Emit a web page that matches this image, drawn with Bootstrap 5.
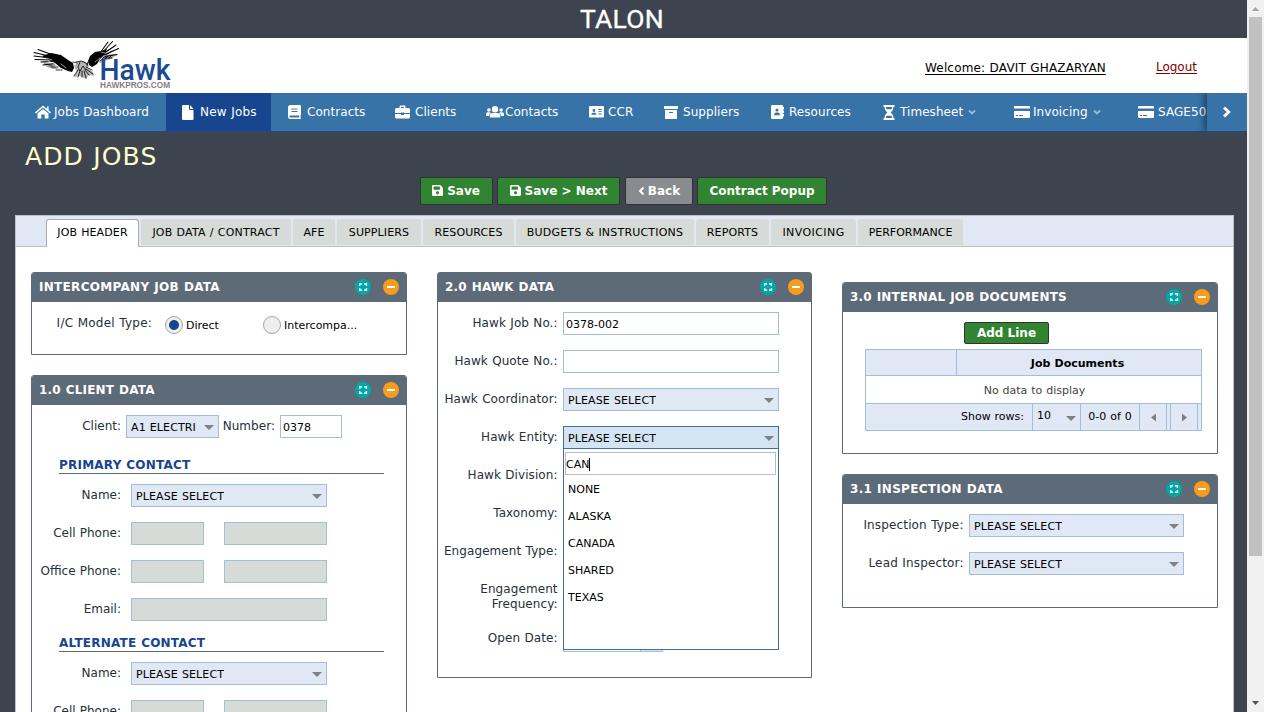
<!DOCTYPE html>
<html lang="en">
<head>
<meta charset="utf-8">
<meta name="viewport" content="width=device-width, initial-scale=1">
<title>Talon - Add Jobs</title>
<link href="https://cdn.jsdelivr.net/npm/bootstrap@5.3.0/dist/css/bootstrap.min.css" rel="stylesheet">
<style>
body{font-family:"DejaVu Sans",Verdana,sans-serif;font-size:12px;line-height:15px;color:#000;background:#3e444f;height:712px;overflow:hidden;word-spacing:.034em}
.page{width:1247px;height:712px;overflow:hidden}
.brandbar{height:38px;font:400 26.5px/38px Roboto,sans-serif;color:#fff;padding-right:3px;letter-spacing:.3px;-webkit-text-stroke:.3px #fff}
.userbar{height:55px;padding:0 50px 0 33px}
.userbar a{line-height:16px;text-underline-offset:2px}
.welcome{color:#000;margin:4px 50px 0 0;letter-spacing:.16px}
.logout{color:#800000;margin-top:2px}
.mainnav{height:39px;background:#3873a8;border-bottom:1px solid #1c4a8a;padding-left:19px;color:#fff;position:relative;letter-spacing:.06px}
.mainnav .nav-link{width:var(--w);padding:0 0 0 16px;color:#fff;line-height:38px;height:38px;white-space:nowrap}
.mainnav .nav-link.active{background:#17468f;height:38px;letter-spacing:.2px}
.mainnav .ic{width:var(--i);flex:none;display:flex;align-items:center}
.mainnav .caret{margin-left:5px;opacity:.5}
.i1{--w:147px;--i:19px}.i2{--w:106px;--i:18px}.i3{--w:107px;--i:19px}.i4{--w:91px;--i:20px}
.i5{--w:103px;--i:19px}.i6{--w:75px;--i:19px}.i7{--w:107px;--i:19px}.i8{--w:112px;--i:18px}
.i9{--w:131px;--i:17px}.i10{--w:124px;--i:19px}.i11{--w:100px;--i:20px}
.mainnav .i2.active{width:105px;margin-right:1px}
.scroller{position:absolute;right:0;top:0;width:40px;height:38px;background:#3873a8;box-shadow:0 0 8px 2px rgba(0,0,0,.5);clip-path:inset(0 0 0 -12px)}
.title{font-size:25px;line-height:30px;color:#ffc;padding:10px 0 0 25px;height:45px;letter-spacing:1.100px}
.toolbar{height:38px;padding-left:420px}
.tbtn{height:28px;border:1px solid #333;border-radius:2px;background:#318431;color:#fff;font-weight:700;font-size:12px;line-height:24px;padding:0;white-space:nowrap}
.tbtn.gray{background:#888b90}
.b1{width:73px}.b2{width:123px;margin-left:4px}.b3{width:68px;margin-left:5px}.b4{width:130px;margin-left:4px}
.tbtn svg{margin:0 4px -1px 0}
.b1 svg{margin-left:-1px}
.b3 svg{margin-right:3px}
.panel{width:1219px;height:520px;margin-left:15px;border:1px solid #bfc1c6;background:#fff}
.tabstrip{height:31px;background:#e0e7f5;border-bottom:1px solid #bfc1c6;padding:3px 0 0 30px;gap:2px;flex-wrap:nowrap;font-size:11px}
.tabstrip .nav-link{height:26px;width:var(--w);padding:0;text-align:center;line-height:27px;color:#000;background:#d6dbd7;border:0;border-radius:3px 3px 0 0;white-space:nowrap;letter-spacing:.12px}
.tabstrip .nav-link.active{height:28px;line-height:25px;background:#fff;border:1px solid #a9abb0;border-bottom:0;color:#000}
.t1{--w:93px}.t2{--w:150px}.t3{--w:42px}.t4{--w:84px}.t5{--w:91px}.t6{--w:178px}.t7{--w:73px}.t8{--w:85px}.t9{--w:105px}
.tabstrip .t2,.tabstrip .t6{letter-spacing:.2px}.tabstrip .t8{letter-spacing:.42px}.tabstrip .t9{letter-spacing:0}
.cols{padding:25px 15px 0;gap:30px}
.cols>div{width:376px;flex:none}
.cols>.mid{width:375px}
.cols>.right{padding-top:10px}
.box{border:1px solid #5d6a77;border-radius:3px 3px 0 0;margin-bottom:20px;background:#fff;overflow:hidden}
.box.over{overflow:visible}
.boxhead{height:29px;background:#5d6a77;color:#fff;font-weight:700;padding:0 7px 1px 7px;letter-spacing:.2px}
.boxhead span{line-height:28px}
.boxhead svg{margin-top:-1px}
.wide{letter-spacing:.3px}
.h83{height:83px}.h400{height:400px}.h406{height:406px}.h172{height:172px}.h134{height:134px}
.boxbody{padding-top:10px}
.frow{height:23px;margin-bottom:15px}
.frow label{width:var(--lw);text-align:right;line-height:22px;color:#26303a;white-space:nowrap;flex:none;letter-spacing:.08px;padding-right:.400px}
.client{--lw:89px}.hawk{--lw:120px}.insp{--lw:121px}
.client .frow label{letter-spacing:0;padding-right:0}
.insp .frow label{letter-spacing:.15px}
.fld{height:23px;border:1px solid #a3bfd5;background:#fff;font-size:11px;line-height:23px;padding-left:2px;white-space:nowrap;flex:none}
.fld.sel{background:#e0e7f5;padding:2px 4px 0 4px;display:flex;align-items:center;justify-content:space-between}
.fld.sel span{overflow:hidden;letter-spacing:.12px;line-height:20px}
.fld.off{background:#d6dbd7}
.fld.open{background:#d4e4f3;border-color:#3c7099}
.tri{width:0;height:0;border:5px solid transparent;border-top-color:#808080;border-bottom:0}
.w216{width:216px}.w215{width:215px}.w196{width:196px}.w93{width:93px}.w62{width:62px}.w73{width:73px}.w103{width:103px}.w100{width:100px}
.sect{width:325px;height:16px;margin:0 0 10px 27px;border-bottom:1px solid #5d6a77;color:#17468f;font-weight:700;line-height:14px;letter-spacing:.22px}
.radio{width:18px;height:18px;border:1px solid #a5a5a5;border-radius:50%;background:#eee}
.radio.on{background:radial-gradient(circle,#17468f 4.5px,#eee 5.4px)}
.drop{position:absolute;left:0;top:22px;width:216px;height:202px;border:1px solid #3c7099;background:#fff;z-index:5;font-size:11px;padding:3px 2px 0 1px}
.drop .query{height:23px;border:1px solid #bdbdbd;line-height:23px;padding-left:0;margin-bottom:1px}
.cursor{display:inline-block;width:1px;height:13px;background:#000;vertical-align:-3px}
.drop .opt{height:27px;line-height:28px;padding-left:3px}
.grid{width:337px;height:82px;margin:5px 0 0 22px;border:1px solid #a3bfd5;font-size:11px}
.grid .bl{border-left:1px solid #a3bfd5}
.ghead{height:26px;background:#e0e7f5;border-bottom:1px solid #a3bfd5;line-height:27px;font-weight:700}
.ghead .flex-fill{padding-right:3px}
.gempty{height:28px;border-bottom:1px solid #a3bfd5;line-height:29px;color:#444;padding-left:2px}
.gpager{height:26px;background:#e0e7f5;line-height:25px}
.addline{width:85px;height:22px;line-height:19px;margin-left:121px}
.sbar{width:17px;height:712px;background:#f1f1f1}
.thumb{width:13px;height:539px;background:#c1c1c1}
.ms-5p{margin-left:5px}.ms-10p{margin-left:10px}.ms-20p{margin-left:20px}
.mb-20{margin-bottom:20px}
.client.frow label.iclabel{width:120.500px;letter-spacing:.23px;text-align:right}
.rg1{margin-left:12.500px;height:25px;width:98px}.rg2{height:25px}
.rt{font-size:11px;margin-left:3px;line-height:27px;height:25px}
.client .frow label.numlabel{width:56px;margin-left:0;letter-spacing:.04px}
.tall{height:36px}.hawk .tall label{line-height:15px;padding-top:4px}
.hawk .last label{line-height:19px}
.datebtn{width:22px;background:#e0e7f5;border-left:1px solid #a3bfd5}
.gc1{width:90px}
.p1{width:166px;padding-right:8px}.p2{width:48px;padding:0 4px 0 4px}.p3{width:59px}.p4{width:27px}.p5{width:4px}
.p2 span{line-height:23px;align-self:flex-start}
.p2 .tri{margin-top:2px}
</style>
</head>
<body class="d-flex">
<svg width="0" height="0" class="position-absolute">
<symbol id="max" viewBox="0 0 16 16"><circle cx="8" cy="8" r="8" fill="#00a9a8"/><path d="M4.700 6.900V4.700h2.400M9 4.700h2.400v2.200M11.400 9.100v2.200H9M7.100 11.300H4.700V9.100" fill="none" stroke="#fff" stroke-width="1.400"/></symbol>
<symbol id="min" viewBox="0 0 16 16"><circle cx="8" cy="8" r="8" fill="#f89c1c"/><path d="M4 7h8v2H4z" fill="#fff"/></symbol>
<symbol id="save" viewBox="0 32 448 448"><path fill="#fff" d="M433.941 129.941l-83.882-83.882A48 48 0 0 0 316.118 32H48C21.490 32 0 53.490 0 80v352c0 26.510 21.490 48 48 48h352c26.510 0 48-21.490 48-48V163.882a48 48 0 0 0-14.059-33.941zM224 416c-35.346 0-64-28.654-64-64s28.654-64 64-64 64 28.654 64 64-28.654 64-64 64zm96-304.520V212c0 6.627-5.373 12-12 12H76c-6.627 0-12-5.373-12-12V108c0-6.627 5.373-12 12-12h228.520c3.183 0 6.235 1.264 8.485 3.515l3.480 3.480A11.996 11.996 0 0 1 320 111.480z"/></symbol>
<symbol id="card2" viewBox="0 0 16 14"><path fill="#fff" fill-rule="evenodd" d="M1 1h14q1 0 1 1v1.500H0V2q0-1 1-1zM0 6h16v6q0 1-1 1H1q-1 0-1-1zM2 10v1h2v-1zM5 10v1h4v-1z"/></symbol>
<symbol id="down" viewBox="0 0 8 6"><path d="M1 1.500l3 3 3-3" fill="none" stroke="#fff" stroke-width="1.900"/></symbol>
</svg>
<div class="page">
  <header>
    <div class="brandbar text-center">TALON</div>
    <div class="userbar bg-white d-flex align-items-center">
      <svg width="140" height="55" viewBox="33 38 140 55" class="me-auto">
        <g fill="#000" stroke="#000" stroke-linecap="round" stroke-linejoin="round">
          <path stroke="none" fill="#aaa" d="M42 61l8 3 9 5-6 0-6-2zM103 56l8-2 6 1-7 4-7 3-4 1z"/>
          <path stroke="none" d="M42 56l9-3 10 2 7 5 5 3 1 5-2 4-4-1-7-3-6-5-6-3z"/>
          <path stroke="none" d="M88 61l2-5 5-4 6-1 6-2-2 5-5 5-3 5-5 3-3-2z"/>
          <path fill="none" stroke-width="1.100" d="M53 55l-15-5.500M51 56.500l-17-4M50 58l-16-2M50 60l-15-.500M52 61.500l-11 .500M54 63.500l-11 1.500M100 53l8-11M102 53l10.500-11.500M103 54l13-9M104 55l14.500-6.500M105 56.500l12-2M104 58l8 0"/>
          <path stroke="none" fill="#b5b5b5" d="M74 66l4-4 6-1 4 3 0 4 5 4 1 4-5-1-3 4-6-3-6 1 3-5z"/>
          <path fill="none" stroke-width=".8" d="M76 62l5-1 5 2 2 3M80 62l-2 5 2 4 3-5 3 4M78 70l-4 6M80 71l-2 6M82 71l0 6M84 71l2 7M85 70l4 5M86 69l7 5M86 67l6 3M73 62l4 1M88 62l-1 3M49 65l6 0M51 67l7 0M56 70l6 0M106 55l6-4M100 61l4-4M104 60l4-4M109 58l3-3"/>
          <path fill="none" stroke="#fff" stroke-width=".6" d="M46 58l6 2M48 61l7 3M95 62l5-4M101 52l4 1M61 64l5 4"/>
        </g>
        <text x="99.500" y="80" textLength="71" lengthAdjust="spacingAndGlyphs" font-family="Roboto" font-weight="500" font-size="29" fill="#1d4a95">Hawk</text>
        <text x="100" y="88" textLength="70" lengthAdjust="spacingAndGlyphs" font-family="Liberation Sans" font-weight="700" font-size="8.500" fill="#858080">HAWKPROS.COM</text>
      </svg>
      <a href="#" class="welcome">Welcome: DAVIT GHAZARYAN</a>
      <a href="#" class="logout">Logout</a>
    </div>
    <nav class="mainnav nav flex-nowrap overflow-hidden">
      <a class="nav-link d-flex i1" href="#"><span class="ic"><svg width="16" height="14" viewBox="0 0 16 14"><path fill="#fff" d="M8 4l5.500 4.500V13q0 .500-.500.500H9.700V9.500H6.300v4H3q-.500 0-.500-.500V8.500z"/><path d="M.5 8L8 1.500 15.500 8M12.800 1.500v4" fill="none" stroke="#fff" stroke-width="1.600"/></svg></span>Jobs Dashboard</a>
      <a class="nav-link d-flex active i2" href="#"><span class="ic"><svg width="12" height="15" viewBox="0 0 12 15"><path fill="#fff" d="M1 0h6v4q0 1 1 1h3.500v9q0 1-1 1H1q-1 0-1-1V1q0-1 1-1zM8 0l3.500 4H8z"/></svg></span>New Jobs</a>
      <a class="nav-link d-flex i3" href="#"><span class="ic"><svg width="13" height="14" viewBox="0 0 13 14"><path fill="#fff" fill-rule="evenodd" d="M2.500 0H12q1 0 1 1v8.500q0 .500-.500 1v2q.500 0 .500.700t-.700.800H2.500Q0 14 0 11.500v-9Q0 0 2.500 0zM3.500 3.500v1h6v-1zM3.500 6v1h6V6zM2.500 10.500q-1 0-1 1t1 1h8.700v-2z"/></svg></span>Contracts</a>
      <a class="nav-link d-flex i4" href="#"><span class="ic"><svg width="15" height="14" viewBox="0 0 15 14"><path fill="#fff" fill-rule="evenodd" d="M4.500 3V1.500Q4.500.500 5.500.500h4q1 0 1 1V3h3Q15 3 15 4.500V8H9V7.500H6V8H0V4.500Q0 3 1.500 3zM6 2v1h3V2zM0 9h6v1h3V9h6v3q0 1.500-1.500 1.500h-12Q0 13.500 0 12z"/></svg></span>Clients</a>
      <a class="nav-link d-flex i5" href="#"><span class="ic"><svg width="18" height="12" viewBox="0 0 18 12"><g fill="#fff"><circle cx="9" cy="3.200" r="3.200"/><circle cx="2.900" cy="4" r="1.800"/><circle cx="15.100" cy="4" r="1.800"/><path d="M3.800 11.500V10q0-3 3-3h4.400q3 0 3 3v1.500zM0 9.500V8q0-1.800 1.800-1.800h2L4.800 7Q3.200 8 3 10H0zM18 9.500V8q0-1.800-1.800-1.800h-2l-1 .8q1.600 1 1.800 3h3z"/></g></svg></span>Contacts</a>
      <a class="nav-link d-flex i6" href="#"><span class="ic"><svg width="15" height="12" viewBox="0 0 15 12"><path fill="#fff" fill-rule="evenodd" d="M1 0h13q1 0 1 1v9.500q0 1-1 1H1q-1 0-1-1V1q0-1 1-1zM3.500 4.500A1.400 1.400 0 1 0 6.300 4.500 1.400 1.400 0 1 0 3.500 4.500zM2.300 8.800h5.200Q7.300 6.700 5.900 6.700h-2Q2.500 6.700 2.300 8.800zM9.300 3v.900h3.500V3zM9.300 5.200v.9h3.500v-.9zM9.300 7.500v.9h3.500v-.9z"/></svg></span>CCR</a>
      <a class="nav-link d-flex i7" href="#"><span class="ic"><svg width="14" height="13" viewBox="0 0 14 13"><path fill="#fff" fill-rule="evenodd" d="M0 0h14v3H0zM1 4h12v8.500q0 .500-.500.500h-11q-.500 0-.500-.500zM5 6v1h4V6z"/></svg></span>Suppliers</a>
      <a class="nav-link d-flex i8" href="#"><span class="ic"><svg width="13" height="14" viewBox="0 0 13 14"><path fill="#fff" fill-rule="evenodd" d="M1.200 0h9.600Q12 0 12 1.200V2h1v2.500h-1v1h1V8h-1v1h1v2.500h-1v1.300q0 1.200-1.200 1.200H1.200Q0 14 0 12.800V1.200Q0 0 1.200 0zM4.400 5A1.600 1.600 0 1 0 7.600 5 1.600 1.600 0 1 0 4.400 5zM3 10.200h6q-.100-2.700-1.900-2.700H4.900Q3.100 7.500 3 10.200z"/></svg></span>Resources</a>
      <a class="nav-link d-flex i9" href="#"><span class="ic"><svg width="12" height="15" viewBox="0 0 12 15"><path fill="#fff" fill-rule="evenodd" d="M.5 0h11v2h-1q0 3.500-2.800 5.500Q10.500 9.500 10.500 13h1v2H.5v-2h1q0-3.500 2.800-5.500Q1.500 5.500 1.500 2h-1zM3 2q0 1.200.500 2.200h5Q9 3.200 9 2zM3.500 10.800Q3 11.800 3 13h6q0-1.200-.5-2.200z"/></svg></span>Timesheet<svg class="caret align-self-center" width="8" height="6"><use href="#down"/></svg></a>
      <a class="nav-link d-flex i10" href="#"><span class="ic"><svg width="16" height="14"><use href="#card2"/></svg></span>Invoicing<svg class="caret align-self-center" width="8" height="6"><use href="#down"/></svg></a>
      <a class="nav-link d-flex i11" href="#"><span class="ic"><svg width="16" height="14"><use href="#card2"/></svg></span>SAGE50</a>
      <div class="scroller d-flex align-items-center justify-content-center"><svg width="10" height="12" viewBox="0 0 10 12"><path d="M2 1.500L6.800 6 2 10.500" fill="none" stroke="#fff" stroke-width="2.800"/></svg></div>
    </nav>
  </header>
  <h1 class="title m-0 fw-normal">ADD JOBS</h1>
  <div class="toolbar d-flex">
    <button class="tbtn b1"><svg width="11" height="11" class="align-baseline"><use href="#save"/></svg>Save</button>
    <button class="tbtn b2"><svg width="11" height="11" class="align-baseline"><use href="#save"/></svg>Save &gt; Next</button>
    <button class="tbtn gray b3"><svg width="7" height="10" viewBox="0 0 7 10" class="align-baseline"><path d="M5.500 1.500L2 5l3.500 3.500" fill="none" stroke="#fff" stroke-width="2"/></svg>Back</button>
    <button class="tbtn b4">Contract Popup</button>
  </div>
  <main class="panel">
    <nav class="tabstrip nav">
      <a class="nav-link active t1" href="#">JOB HEADER</a><a class="nav-link t2" href="#">JOB DATA / CONTRACT</a><a class="nav-link t3" href="#">AFE</a><a class="nav-link t4" href="#">SUPPLIERS</a><a class="nav-link t5" href="#">RESOURCES</a><a class="nav-link t6" href="#">BUDGETS &amp; INSTRUCTIONS</a><a class="nav-link t7" href="#">REPORTS</a><a class="nav-link t8" href="#">INVOICING</a><a class="nav-link t9" href="#">PERFORMANCE</a>
    </nav>
    <div class="cols d-flex align-items-start">
      <div>
        <section class="box h83">
          <div class="boxhead d-flex align-items-center"><span class="me-auto wide">INTERCOMPANY JOB DATA</span><svg width="16" height="16" class="me-2"><use href="#max"/></svg><svg width="16" height="16" class="ms-1"><use href="#min"/></svg></div>
          <div class="boxbody">
            <div class="frow client d-flex"><label class="iclabel">I/C Model Type:</label>
              <div class="d-flex align-items-center rg1"><i class="radio on"></i><span class="rt">Direct</span></div>
              <div class="d-flex align-items-center rg2"><i class="radio"></i><span class="rt">Intercompa...</span></div>
            </div>
          </div>
        </section>
        <section class="box h400">
          <div class="boxhead d-flex align-items-center"><span class="me-auto">1.0 CLIENT DATA</span><svg width="16" height="16" class="me-2"><use href="#max"/></svg><svg width="16" height="16" class="ms-1"><use href="#min"/></svg></div>
          <div class="boxbody client">
            <div class="frow d-flex mb-20"><label>Client:</label><div class="fld sel w93 ms-5p"><span>A1 ELECTRI</span><i class="tri"></i></div><label class="numlabel">Number:</label><div class="fld w62 ms-5p">0378</div></div>
            <div class="sect">PRIMARY CONTACT</div>
            <div class="frow d-flex"><label>Name:</label><div class="fld sel w196 ms-10p"><span>PLEASE SELECT</span><i class="tri"></i></div></div>
            <div class="frow d-flex"><label>Cell Phone:</label><div class="fld off w73 ms-10p"></div><div class="fld off w103 ms-20p"></div></div>
            <div class="frow d-flex"><label>Office Phone:</label><div class="fld off w73 ms-10p"></div><div class="fld off w103 ms-20p"></div></div>
            <div class="frow d-flex"><label>Email:</label><div class="fld off w196 ms-10p"></div></div>
            <div class="sect">ALTERNATE CONTACT</div>
            <div class="frow d-flex"><label>Name:</label><div class="fld sel w196 ms-10p"><span>PLEASE SELECT</span><i class="tri"></i></div></div>
            <div class="frow d-flex"><label>Cell Phone:</label><div class="fld off w73 ms-10p"></div><div class="fld off w103 ms-20p"></div></div>
          </div>
        </section>
      </div>
      <div class="mid">
        <section class="box over h406">
          <div class="boxhead d-flex align-items-center"><span class="me-auto">2.0 HAWK DATA</span><svg width="16" height="16" class="me-2"><use href="#max"/></svg><svg width="16" height="16" class="ms-1"><use href="#min"/></svg></div>
          <div class="boxbody hawk">
            <div class="frow d-flex"><label>Hawk Job No.:</label><div class="fld w216 ms-5p">0378-002</div></div>
            <div class="frow d-flex"><label>Hawk Quote No.:</label><div class="fld w216 ms-5p"></div></div>
            <div class="frow d-flex"><label>Hawk Coordinator:</label><div class="fld sel w216 ms-5p"><span>PLEASE SELECT</span><i class="tri"></i></div></div>
            <div class="frow d-flex"><label>Hawk Entity:</label>
              <div class="position-relative ms-5p">
                <div class="fld sel open w216"><span>PLEASE SELECT</span><i class="tri"></i></div>
                <div class="drop"><div class="query">CAN<i class="cursor"></i></div><div class="opt">NONE</div><div class="opt">ALASKA</div><div class="opt">CANADA</div><div class="opt">SHARED</div><div class="opt">TEXAS</div></div>
              </div></div>
            <div class="frow d-flex"><label>Hawk Division:</label></div>
            <div class="frow d-flex"><label>Taxonomy:</label></div>
            <div class="frow d-flex"><label>Engagement Type:</label></div>
            <div class="frow tall d-flex"><label>Engagement<br>Frequency:</label></div>
            <div class="frow last d-flex"><label>Open Date:</label><div class="fld w100 ms-5p d-flex justify-content-end"><i class="datebtn"></i></div></div>
          </div>
        </section>
      </div>
      <div class="right">
        <section class="box h172">
          <div class="boxhead d-flex align-items-center"><span class="me-auto">3.0 INTERNAL JOB DOCUMENTS</span><svg width="16" height="16" class="me-2"><use href="#max"/></svg><svg width="16" height="16" class="ms-1"><use href="#min"/></svg></div>
          <div class="boxbody">
            <button class="tbtn addline d-block">Add Line</button>
            <div class="grid">
              <div class="ghead d-flex"><div class="gc1"></div><div class="bl flex-fill text-center">Job Documents</div></div>
              <div class="gempty text-center">No data to display</div>
              <div class="gpager d-flex">
                <div class="p1 text-end">Show rows:</div>
                <div class="p2 bl d-flex justify-content-between align-items-center"><span>10</span><i class="tri"></i></div>
                <div class="p3 bl text-center">0-0 of 0</div>
                <div class="p4 bl d-flex align-items-center justify-content-center"><svg width="5" height="9"><path d="M5 .500v8L0 4.500z" fill="#808080"/></svg></div>
                <div class="p5 bl"></div>
                <div class="p4 bl d-flex align-items-center justify-content-center"><svg width="5" height="9"><path d="M0 .500v8l5-4z" fill="#808080"/></svg></div>
                <div class="bl"></div>
              </div>
            </div>
          </div>
        </section>
        <section class="box h134">
          <div class="boxhead d-flex align-items-center"><span class="me-auto wide">3.1 INSPECTION DATA</span><svg width="16" height="16" class="me-2"><use href="#max"/></svg><svg width="16" height="16" class="ms-1"><use href="#min"/></svg></div>
          <div class="boxbody insp">
            <div class="frow d-flex"><label>Inspection Type:</label><div class="fld sel w215 ms-5p"><span>PLEASE SELECT</span><i class="tri"></i></div></div>
            <div class="frow d-flex"><label>Lead Inspector:</label><div class="fld sel w215 ms-5p"><span>PLEASE SELECT</span><i class="tri"></i></div></div>
          </div>
        </section>
      </div>
    </div>
  </main>
</div>
<div class="sbar d-flex flex-column align-items-center">
  <svg width="17" height="17"><path d="M5 11h7L8.500 7z" fill="#a3a3a3"/></svg>
  <div class="thumb"></div>
  <svg width="17" height="17" class="mt-auto"><path d="M5 6h7l-3.500 4z" fill="#505050"/></svg>
</div>
<script src="https://cdn.jsdelivr.net/npm/bootstrap@5.3.0/dist/js/bootstrap.bundle.min.js"></script>
</body>
</html>
